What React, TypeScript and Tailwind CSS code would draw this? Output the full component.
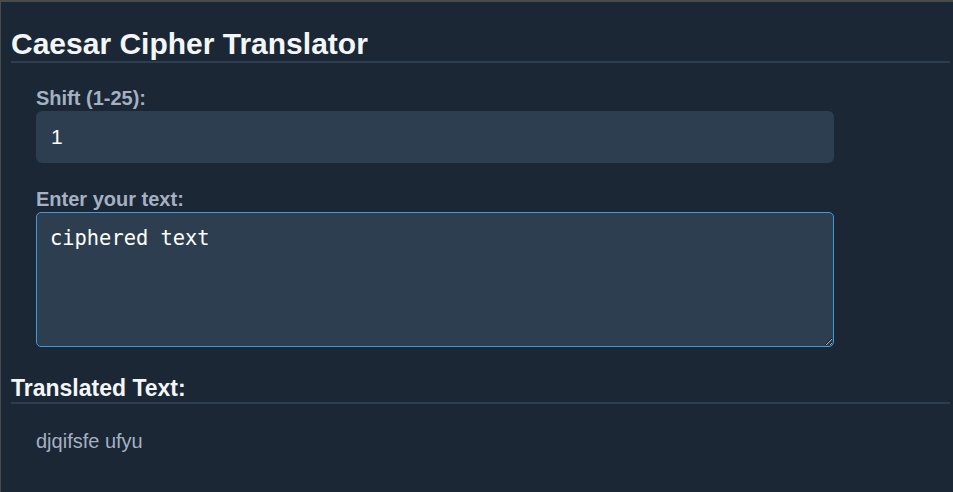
import { useEffect, useRef, useState } from "react";

function shiftText(text: string, shift: number) {
  return text.replace(/[a-z]/gi, (ch) => {
    const base = ch <= "Z" ? 65 : 97;
    return String.fromCharCode(((ch.charCodeAt(0) - base + shift) % 26 + 26) % 26 + base);
  });
}

export default function App() {
  const [shift, setShift] = useState("1");
  const [text, setText] = useState("ciphered text");
  const areaRef = useRef<HTMLTextAreaElement>(null);

  useEffect(() => {
    const el = areaRef.current;
    if (!el) return;
    el.focus();
    el.setSelectionRange(el.value.length, el.value.length);
  }, []);

  const n = Math.min(25, Math.max(1, parseInt(shift, 10) || 0));
  const translated = shiftText(text, n);

  return (
    <div className="min-h-[492px] bg-[#1b2735] border-t-2 border-l border-[#4a4a4a] pl-[10px] pr-[3px] font-['Liberation_Sans',Arial,sans-serif]">
      <h1 className="pt-[24px] text-[30px] leading-[35px] font-bold text-[#f3f6f9] border-b-2 border-[#2d3e50]">
        Caesar Cipher Translator
      </h1>

      <div className="pl-[25px] w-[823px]">
        <label
          htmlFor="shift"
          className="block mt-[24px] mb-[1px] text-[20px] leading-[23px] font-bold text-[#a3b1c2]"
        >
          Shift (1-25):
        </label>
        <input
          id="shift"
          type="text"
          inputMode="numeric"
          value={shift}
          onChange={(e) => setShift(e.target.value.replace(/\D/g, ""))}
          className="block w-full h-[52px] px-[15px] rounded-md bg-[#2d3e50] text-white text-[21px] outline-none font-['Liberation_Sans',Arial,sans-serif]"
        />

        <label
          htmlFor="text"
          className="block mt-[25px] mb-[1px] text-[20px] leading-[23px] font-bold text-[#a3b1c2]"
        >
          Enter your text:
        </label>
        <textarea
          id="text"
          ref={areaRef}
          value={text}
          onChange={(e) => setText(e.target.value)}
          className="block w-full h-[135px] px-[13px] pt-[12px] pb-[10px] rounded-[5px] bg-[#2d3e50] border border-[#3b9ae1] text-white text-[20.4px] leading-[26px] outline-none caret-white font-['DejaVu_Sans_Mono',monospace]"
        />
      </div>

      <h2 className="mt-[28px] pb-[1px] text-[23px] leading-[26px] font-bold text-[#f3f6f9] border-b-2 border-[#2d3e50]">
        Translated Text:
      </h2>
      <p className="mt-[26px] pl-[25px] text-[20px] leading-[23px] text-[#a3b1c2]">
        {translated}
      </p>
    </div>
  );
}
